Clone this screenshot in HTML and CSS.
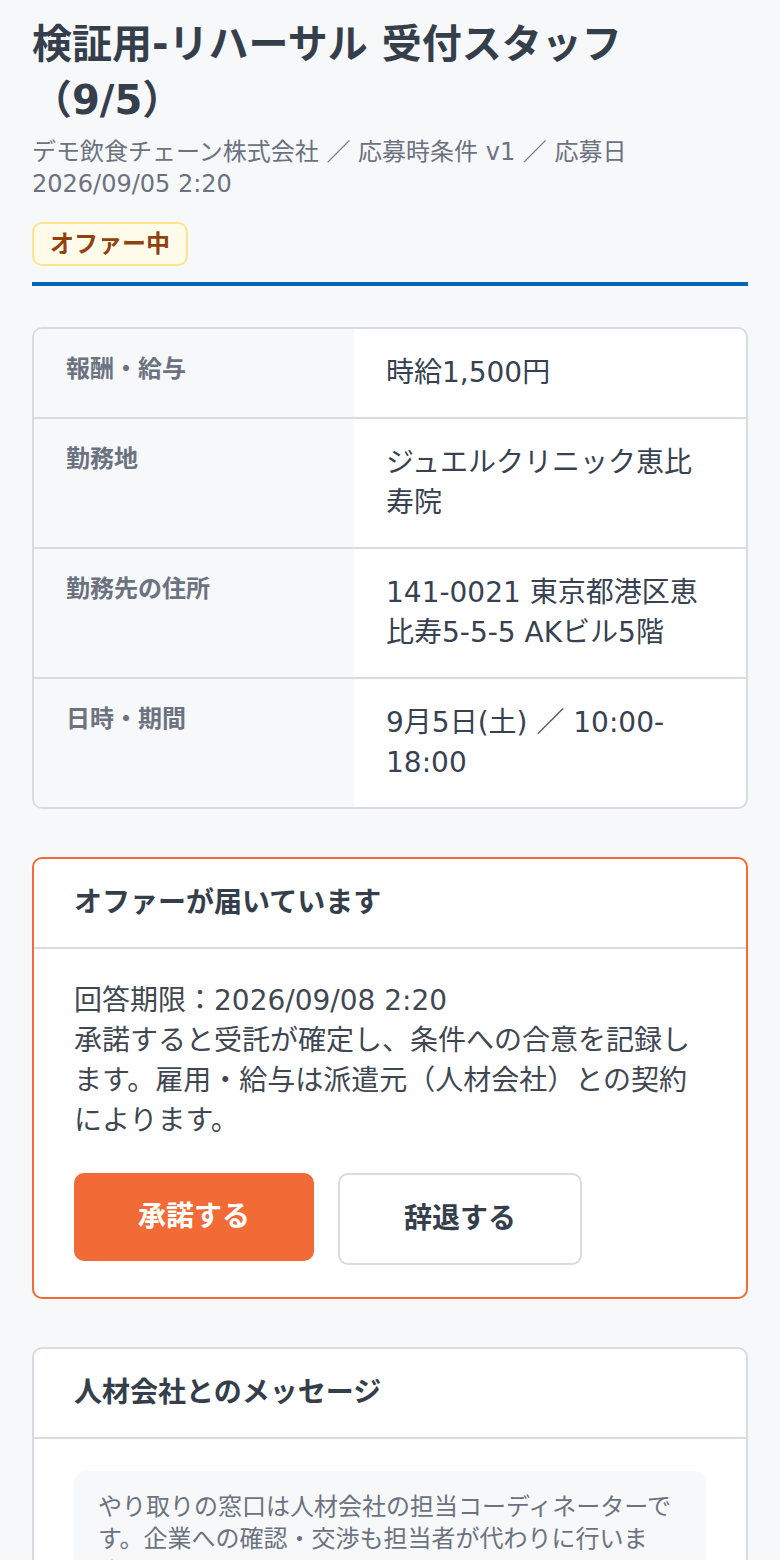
FILE: index.html
```html
<!DOCTYPE html>
<html lang="ja">
<head>
<meta charset="utf-8">
<title>検証用-リハーサル 受付スタッフ（9/5）</title>
<link rel="stylesheet" href="styles.css">
</head>
<body>
<main class="page">
  <header class="head">
    <h1 class="title">検証用-リハーサル 受付スタッフ（9/5）</h1>
    <p class="meta">デモ飲食チェーン株式会社 ／ 応募時条件 v1 ／ 応募日 2026/09/05 2:20</p>
    <span class="badge">オファー中</span>
  </header>

  <section class="spec">
    <div class="row">
      <div class="label">報酬・給与</div>
      <div class="value">時給1,500円</div>
    </div>
    <div class="row">
      <div class="label">勤務地</div>
      <div class="value">ジュエルクリニック恵比寿院</div>
    </div>
    <div class="row">
      <div class="label">勤務先の住所</div>
      <div class="value">141-0021 東京都港区恵比寿5-5-5 AKビル5階</div>
    </div>
    <div class="row">
      <div class="label">日時・期間</div>
      <div class="value">9月5日(土) ／ 10:00-<wbr>18:00</div>
    </div>
  </section>

  <section class="card card-offer">
    <h2 class="card-head">オファーが届いています</h2>
    <div class="card-body">
      <p class="offer-text">回答期限：2026/09/08 2:20<br>承諾すると受託が確定し、条件への合意を記録します。雇用・給与は派遣元（人材会社）との契約によります。</p>
      <div class="actions">
        <button class="btn btn-accept" type="button">承諾する</button>
        <button class="btn btn-decline" type="button">辞退する</button>
      </div>
    </div>
  </section>

  <section class="card">
    <h2 class="card-head">人材会社とのメッセージ</h2>
    <div class="card-body">
      <p class="note">やり取りの窓口は人材会社の担当コーディネーターです。企業への確認・交渉も担当者が代わりに行います。</p>
    </div>
  </section>
</main>
</body>
</html>
```

FILE: styles.css
```css
* { box-sizing: border-box; }
html, body { margin: 0; padding: 0; }
body {
  background: #f7f8fa;
  color: #374151;
  font-family: "DejaVu Sans", "Noto Sans CJK JP", sans-serif;
  text-spacing-trim: space-all;
}
.page {
  padding: 16px 32px 40px;
}
.head {
  padding-bottom: 16px;
  border-bottom: 4px solid #0067b4;
}
.title {
  margin: 0;
  font-size: 40px;
  line-height: 56px;
  font-weight: 700;
  color: #353e4b;
}
.meta {
  margin: 8px 0 0;
  font-size: 24px;
  line-height: 32px;
  color: #6b7280;
}
.badge {
  display: inline-block;
  margin-top: 22px;
  padding: 4px 16px;
  border: 2px solid #fde68a;
  border-radius: 10px;
  background: #fffbeb;
  color: #92400e;
  font-size: 24px;
  line-height: 32px;
  font-weight: 700;
}
.spec {
  margin-top: 41px;
  border: 2px solid #d8dbe0;
  border-radius: 10px;
  overflow: hidden;
  background: #ffffff;
}
.row {
  display: grid;
  grid-template-columns: 320px 1fr;
}
.row + .row { border-top: 2px solid #d8dbe0; }
.label {
  background: #f7f8fa;
  padding: 24px 32px;
  font-size: 24px;
  line-height: 32px;
  font-weight: 700;
  color: #6b7280;
}
.value {
  padding: 24px 32px;
  font-size: 28px;
  line-height: 40px;
  color: #374151;
}
.card {
  margin-top: 48px;
  background: #ffffff;
  border: 2px solid #d8dbe0;
  border-radius: 10px;
  overflow: hidden;
}
.card-offer { border-color: #f26a35; }
.card-head {
  margin: 0;
  padding: 24px 40px;
  font-size: 28px;
  line-height: 40px;
  font-weight: 700;
  color: #353e4b;
  border-bottom: 2px solid #d8dbe0;
}
.card-body {
  padding: 32px 40px;
}
.offer-text {
  margin: 0;
  font-size: 28px;
  line-height: 40px;
  color: #3f4753;
}
.actions {
  display: flex;
  align-items: flex-start;
  gap: 24px;
  margin-top: 32px;
}
.btn {
  font-family: inherit;
  font-size: 28px;
  line-height: 40px;
  font-weight: 700;
  padding: 24px 64px;
  border-radius: 10px;
  cursor: pointer;
}
.btn-accept {
  background: #f26a35;
  color: #ffffff;
  border: none;
}
.btn-decline {
  background: #ffffff;
  color: #353e4b;
  border: 2px solid #d8dbe0;
}
.note {
  margin: 0;
  padding: 20px 24px;
  background: #f7f8fa;
  border-radius: 12px;
  font-size: 24px;
  line-height: 32px;
  color: #6b7280;
}
```
